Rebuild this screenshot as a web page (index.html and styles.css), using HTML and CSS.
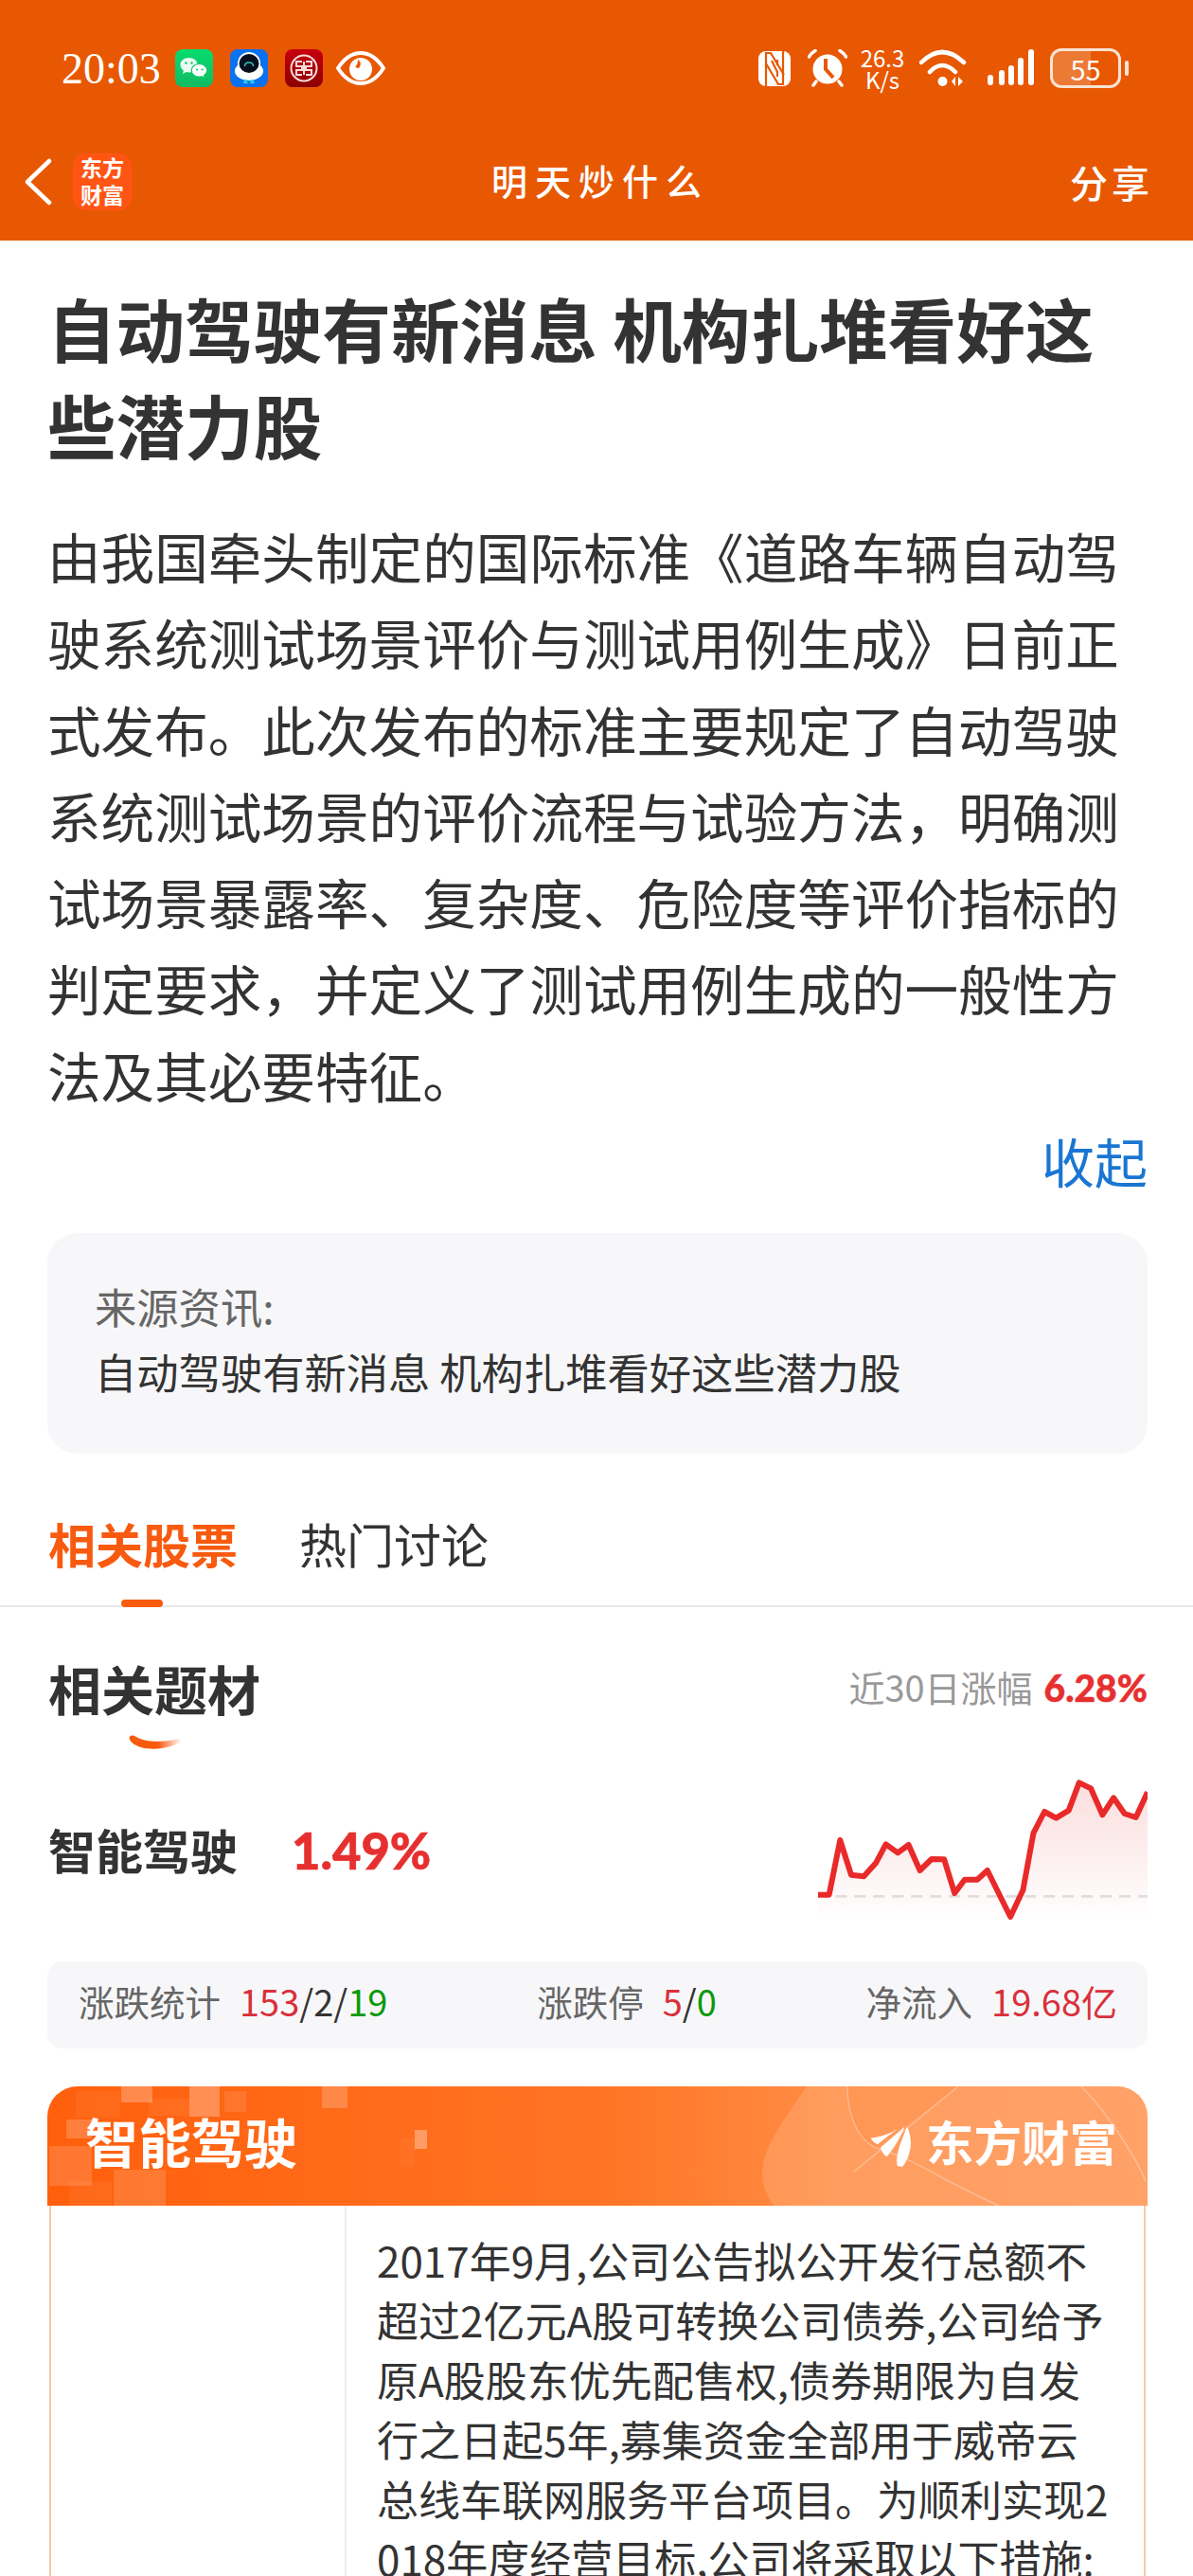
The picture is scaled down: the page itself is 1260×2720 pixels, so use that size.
FILE: index.html
```html
<!DOCTYPE html>
<html lang="zh-CN">
<head>
    <meta charset="UTF-8">
    <meta name="viewport" content="width=device-width, initial-scale=1.0">
    <title>明天炒什么</title>
    <link rel="stylesheet" href="styles.css">
</head>
<body>

<header class="top">
    <div class="status">
        <div class="status-left">
            <span class="time">20:03</span>
            <svg class="app" viewBox="0 0 40 40">
                <defs><linearGradient id="wx" x1="0" y1="0" x2="0" y2="1"><stop offset="0" stop-color="#06dc6f"/><stop offset="1" stop-color="#12bb62"/></linearGradient></defs>
                <rect width="40" height="40" rx="8" fill="url(#wx)"/>
                <path d="M14.500 9C9.300 9 5.500 12.400 5.500 16.500c0 2.400 1.300 4.500 3.400 5.900L8 26l3.800-1.900c.9.300 1.800.4 2.700.4 5.200 0 9-3.400 9-8S19.700 9 14.500 9z" fill="#fff" opacity=".92"/>
                <path d="M25.500 15.500c-4.700 0-8.300 3-8.300 6.800s3.600 6.800 8.300 6.800c.9 0 1.700-.1 2.500-.4l3.300 1.900-.8-3.100c1.900-1.200 3.300-3 3.300-5.200 0-3.800-3.600-6.800-8.300-6.800z" fill="#fff" stroke="#0acb68" stroke-width="1.200"/>
                <circle cx="11.500" cy="14.500" r="1.200" fill="#0acb68"/><circle cx="17.500" cy="14.500" r="1.200" fill="#0acb68"/>
                <circle cx="23" cy="21.500" r="1.100" fill="#0acb68"/><circle cx="28.500" cy="21.500" r="1.100" fill="#0acb68"/>
            </svg>
            <svg class="app app-gap" viewBox="0 0 40 40">
                <rect width="40" height="40" rx="8" fill="#0a72ee"/>
                <ellipse cx="20" cy="23" rx="15" ry="10" fill="#fff"/>
                <circle cx="20" cy="15" r="12" fill="#fff"/>
                <ellipse cx="20" cy="15" rx="10.500" ry="10" fill="#08101f"/>
                <path d="M15.500 18c0-5.500 9-5.500 9 0" fill="none" stroke="#2fc8b4" stroke-width="1.500"/>
                <path d="M15 32h3v3h1v1h-5zM22 32h3v3h1v1h-5z" fill="#27d0e8"/>
            </svg>
            <svg class="app app-gap" viewBox="0 0 40 40">
                <defs><linearGradient id="ic" x1="0" y1="0" x2="0" y2="1"><stop offset="0" stop-color="#c8000e"/><stop offset="1" stop-color="#8b0000"/></linearGradient></defs>
                <rect width="40" height="40" rx="8" fill="url(#ic)"/>
                <circle cx="20" cy="20" r="13.500" fill="none" stroke="#f8dada" stroke-width="2"/>
                <path d="M18 13h-6v5h6v4h-6v5h6M22 13h6v5h-6v4h6v5h-6M20 13v14" fill="none" stroke="#f8dada" stroke-width="2"/>
            </svg>
            <svg class="eye" viewBox="0 0 52 36">
                <path d="M2 18C9 7 17 2 26 2s17 5 24 16c-7 11-15 16-24 16S9 29 2 18z" fill="none" stroke="#fff" stroke-width="4"/>
                <circle cx="26" cy="19" r="12" fill="#fff"/>
                <path d="M23 9c3 2 4 5 1 9l-4-1c2-2 3-5 3-8z" fill="#e85802"/>
            </svg>
        </div>
        <div class="status-right">
            <svg class="nfc" viewBox="0 0 34 37">
                <rect width="34" height="37" rx="8" fill="#fff"/>
                <path d="M8 37V2h5l14 23M26 0v35h-5L8 13M14 10l6 12v5M20 9v6" fill="none" stroke="#e85802" stroke-width="2.200"/>
            </svg>
            <svg class="alarm" viewBox="0 0 42 40">
                <circle cx="21" cy="21" r="15.500" fill="#fff"/>
                <path d="M19 10v11l8 9" fill="none" stroke="#e85802" stroke-width="4"/>
                <path d="M1.500 8C3 5 5.500 3 8 1.500M40.500 8C39 5 36.500 3 34 1.500M9 34l-3 4M33 34l3 4" fill="none" stroke="#fff" stroke-width="3.500" stroke-linecap="round"/>
            </svg>
            <div class="speed">
                <span>26.3</span>
                <span>K/s</span>
            </div>
            <svg class="wifi" viewBox="0 0 50 40">
                <path d="M2 14Q24-8 47 14M11 24Q24 10 38 24" fill="none" stroke="#fff" stroke-width="4.500" stroke-linecap="round"/>
                <circle cx="24.500" cy="34" r="5" fill="#fff"/>
                <path d="M34 34l4-5v10zM41 29v10l5-5z" fill="#fff"/>
            </svg>
            <svg class="signal" viewBox="0 0 50 40">
                <g fill="#fff">
                    <rect x="0" y="27" width="6" height="11" rx="3"/>
                    <rect x="12" y="22" width="6" height="16" rx="3"/>
                    <rect x="22" y="17" width="6" height="21" rx="3"/>
                    <rect x="32" y="9" width="6" height="29" rx="3"/>
                    <rect x="43" y="0" width="6" height="38" rx="3"/>
                </g>
            </svg>
            <div class="battery">
                <span class="battery-fill"></span>
                <span class="battery-num">55</span>
            </div>
            <span class="battery-tip"></span>
        </div>
    </div>
    <nav class="bar">
        <div class="bar-left">
            <svg class="back" viewBox="0 0 30 50">
                <path d="M27 3L4 25l23 22" fill="none" stroke="#fff" stroke-width="4.500" stroke-linecap="round" stroke-linejoin="round"/>
            </svg>
            <span class="logo">东方<br>财富</span>
        </div>
        <span class="bar-title">明天炒什么</span>
        <span class="share">分享</span>
    </nav>
</header>

<main>
    <section class="article">
        <h1>自动驾驶有新消息 机构扎堆看好这些潜力股</h1>
        <p class="summary">由我国牵头制定的国际标准《道路车辆自动驾驶系统测试场景评价与测试用例生成》日前正式发布。此次发布的标准主要规定了自动驾驶系统测试场景的评价流程与试验方法，明确测试场景暴露率、复杂度、危险度等评价指标的判定要求，并定义了测试用例生成的一般性方法及其必要特征。</p>
        <div class="fold">收起</div>
        <div class="source">
            <div class="source-label">来源资讯:</div>
            <div class="source-title">自动驾驶有新消息 机构扎堆看好这些潜力股</div>
        </div>
    </section>

    <div class="tabs">
        <span class="tab tab-active">相关股票</span>
        <span class="tab">热门讨论</span>
    </div>

    <section class="topic">
        <div class="topic-head">
            <h2>相关题材
                <svg class="swoosh" viewBox="0 0 56 16">
                    <defs><linearGradient id="sw" x1="0" y1="0" x2="1" y2="0"><stop offset=".55" stop-color="#f85a0f"/><stop offset="1" stop-color="#f85a0f" stop-opacity="0"/></linearGradient></defs>
                    <path d="M2 1c-3 1-1 6 4 9 10 6 30 7 48-2 3-2 2-5-2-4C38 8 18 8 8 2 6 1 4 0 2 1z" fill="url(#sw)"/>
                </svg>
            </h2>
            <div class="range">近30日涨幅<b>6.28%</b></div>
        </div>
        <div class="topic-row">
            <div class="topic-name">智能驾驶<b>1.49%</b></div>
            <svg class="spark" viewBox="135 480 1045 450" preserveAspectRatio="none">
                <defs><linearGradient id="area" x1="0" y1="0" x2="0" y2="1"><stop offset="0" stop-color="#e82c2c" stop-opacity=".16"/><stop offset="1" stop-color="#e82c2c" stop-opacity="0"/></linearGradient></defs>
                <path d="M135 845L170 845 205 672 240 782 280 787 318 745 350 685 388 712 422 687 458 768 495 732 535 733 568 840 600 797 640 797 672 768 745 915 785 830 818 650 853 582 890 602 930 578 963 490 1000 508 1037 592 1072 538 1107 588 1143 600 1180 520V930H135z" fill="url(#area)"/>
                <path d="M190 850H1180" fill="none" stroke="#e2dcdc" stroke-width="8" stroke-dasharray="36 24"/>
                <path d="M135 845L170 845 205 672 240 782 280 787 318 745 350 685 388 712 422 687 458 768 495 732 535 733 568 840 600 797 640 797 672 768 745 915 785 830 818 650 853 582 890 602 930 578 963 490 1000 508 1037 592 1072 538 1107 588 1143 600 1180 520" fill="none" stroke="#e92a2a" stroke-width="18" stroke-linejoin="round"/>
            </svg>
        </div>
        <div class="stats">
            <div class="stat">涨跌统计<span class="stat-val"><i class="up">153</i>/2/<i class="down">19</i></span></div>
            <div class="stat">涨跌停<span class="stat-val"><i class="up">5</i>/<i class="down">0</i></span></div>
            <div class="stat">净流入<span class="stat-val"><i class="up">19.68亿</i></span></div>
        </div>
    </section>

    <section class="card">
        <div class="card-head">
            <svg class="card-art" viewBox="0 0 1162 126" preserveAspectRatio="none">
                <g fill="#fff">
                    <rect x="78" y="0" width="33" height="17" opacity=".25"/>
                    <rect x="150" y="0" width="32" height="32" opacity=".28"/>
                    <rect x="187" y="5" width="23" height="22" opacity=".1"/>
                    <rect x="30" y="5" width="47" height="28" opacity=".05"/>
                    <rect x="107" y="13" width="43" height="18" opacity=".06"/>
                    <rect x="20" y="35" width="27" height="20" opacity=".2"/>
                    <rect x="2" y="63" width="45" height="42" opacity=".15"/>
                    <rect x="70" y="88" width="55" height="38" opacity=".14"/>
                    <rect x="23" y="100" width="45" height="26" opacity=".05"/>
                    <rect x="290" y="0" width="27" height="23" opacity=".2"/>
                    <rect x="388" y="46" width="13" height="20" opacity=".32"/>
                    <rect x="373" y="55" width="15" height="30" opacity=".04"/>
                    <path d="M802 0C775 40 755 65 755 92c0 12 5 24 12 34h395V0z" opacity=".14"/>
                </g>
                <path d="M845 0c0 30 10 55 30 65L962 0z" fill="#ff8a42" opacity=".35"/>
                <path d="M845 0c0 30 10 55 30 65 50 15 60 30 130 61M962 0L852 90M1092 0c30 30 60 80 68 100" fill="none" stroke="#fff" stroke-opacity=".3" stroke-width="1.500"/>
            </svg>
            <h3>智能驾驶</h3>
            <div class="brand">
                <svg class="brand-icon" viewBox="415 125 140 145">
                    <g fill="#fff">
                        <path d="M420 172C455 168 490 155 516 136 488 156 464 174 442 192 432 188 424 181 420 172z"/>
                        <path d="M452 202C476 182 504 158 528 136 518 168 494 204 472 232 460 224 453 213 452 202z"/>
                        <path d="M506 262C498 235 512 195 537 135 556 175 552 225 522 264z"/>
                    </g>
                </svg>
                <span>东方财富</span>
            </div>
        </div>
        <table class="card-table">
            <tr>
                <td class="col-name"></td>
                <td class="col-text">2017年9月,公司公告拟公开发行总额不超过2亿元A股可转换公司债券,公司给予原A股股东优先配售权,债券期限为自发行之日起5年,募集资金全部用于威帝云总线车联网服务平台项目。为顺利实现2018年度经营目标,公司将采取以下措施:</td>
            </tr>
        </table>
    </section>
</main>

</body>
</html>
```

FILE: styles.css
```css
html, body {
    height: 2720px;
    overflow: hidden;
}

body {
    margin: 0;
    padding: 0;
    background-color: white;
    color: #333;
    font-family: "Noto Sans CJK SC", "Noto Sans", sans-serif;
}

h1, h2, h3, p {
    margin: 0;
}

/* top orange block */
.top {
    background-color: #e85802;
    color: white;
    height: 254px;
}

.status {
    height: 146px;
    padding: 50px 68px 0 65px;
    box-sizing: border-box;
    display: flex;
    justify-content: space-between;
}

.status-left, .status-right {
    display: flex;
    align-items: center;
    height: 44px;
}

.time {
    font-family: "Liberation Serif", serif;
    font-size: 46px;
    width: 120px;
}

.app {
    width: 40px;
    height: 40px;
}

.app-gap {
    margin-left: 18px;
}

.eye {
    width: 52px;
    height: 36px;
    margin-left: 14px;
}

.nfc {
    width: 34px;
    height: 37px;
}

.alarm {
    width: 42px;
    height: 40px;
    margin-left: 18px;
}

.speed {
    width: 52px;
    margin-left: 11px;
    display: flex;
    flex-direction: column;
    align-items: center;
    font-size: 24px;
    line-height: 23px;
}

.wifi {
    width: 50px;
    height: 40px;
    margin-left: 13px;
}

.signal {
    width: 50px;
    height: 40px;
    margin-left: 22px;
}

.battery {
    position: relative;
    width: 75px;
    height: 42px;
    margin-left: 16px;
    box-sizing: border-box;
    border: 3px solid #fbe3d4;
    border-radius: 12px;
    overflow: hidden;
    text-align: center;
    font-size: 29px;
    line-height: 36px;
}

.battery-fill {
    position: absolute;
    left: 0;
    top: 0;
    bottom: 0;
    width: 58%;
    background-color: rgba(255, 255, 255, 0.2);
}

.battery-num {
    position: relative;
}

.battery-tip {
    width: 4px;
    height: 16px;
    margin-left: 4px;
    border-radius: 2px;
    background-color: #fbe3d4;
}

.bar {
    position: relative;
    height: 92px;
    display: flex;
    align-items: center;
    justify-content: space-between;
    padding: 0 42px 0 25px;
}

.bar-left {
    display: flex;
    align-items: center;
}

.back {
    width: 30px;
    height: 50px;
}

.logo {
    width: 62px;
    height: 60px;
    margin-left: 22px;
    background-color: #ff5514;
    border-radius: 14px;
    text-align: center;
    font-size: 23px;
    font-weight: bold;
    line-height: 29px;
}

.bar-title {
    position: absolute;
    left: 519px;
    top: 16px;
    font-size: 38px;
    font-weight: 500;
    line-height: 56px;
    letter-spacing: 8px;
}

.share {
    font-size: 40px;
    font-weight: 500;
    letter-spacing: 4px;
}

/* article */
.article {
    padding: 41px 48px 0 50px;
}

h1 {
    font-size: 72.6px;
    font-weight: bold;
    line-height: 102px;
}

.summary {
    margin-top: 42px;
    font-size: 56.6px;
    line-height: 91.3px;
}

.fold {
    margin: 5px 0 0;
    text-align: right;
    color: #1a76d2;
    font-size: 56px;
    line-height: 80px;
}

.source {
    margin: 37px 0 0;
    padding: 43px 50px 52px;
    background-color: #f7f7f9;
    border-radius: 32px;
    font-size: 44.3px;
    line-height: 69px;
}

.source-label {
    color: #666;
}

/* tabs */
.tabs {
    display: flex;
    gap: 65px;
    padding: 59px 0 31px 51px;
    border-bottom: 2px solid #e8e8e8;
}

.tab {
    position: relative;
    font-size: 50px;
    line-height: 70px;
}

.tab-active {
    color: #f85a0f;
    font-weight: bold;
}

.tab-active::after {
    content: "";
    position: absolute;
    left: 77px;
    bottom: -33px;
    width: 44px;
    height: 8px;
    border-radius: 4px;
    background-color: #f85a0f;
}

/* topic block */
.topic {
    padding: 44px 48px 0 50px;
}

.topic-head {
    display: flex;
    justify-content: space-between;
    align-items: center;
}

h2 {
    position: relative;
    margin-left: 1px;
    font-size: 56px;
    font-weight: bold;
    line-height: 80px;
}

.swoosh {
    position: absolute;
    left: 85px;
    top: 90px;
    width: 56px;
    height: 16px;
}

.range {
    color: #999;
    font-size: 38px;
    line-height: 80px;
}

.range b {
    margin-left: 12px;
    color: #e63030;
    font-family: Lato, sans-serif;
    font-weight: 900;
    font-size: 39px;
    -webkit-text-stroke: 0.5px #e63030;
}

.topic-row {
    display: flex;
    justify-content: space-between;
    align-items: center;
    margin-top: 57px;
    height: 150px;
}

.topic-name {
    margin-left: 1px;
    padding-bottom: 4px;
    font-size: 50px;
    font-weight: bold;
}

.topic-name b {
    margin-left: 57px;
    color: #e63030;
    font-family: Lato, sans-serif;
    font-weight: 900;
    font-size: 52.5px;
    -webkit-text-stroke: 0.6px #e63030;
}

.spark {
    width: 348px;
    height: 150px;
}

.stats {
    display: flex;
    justify-content: space-between;
    align-items: center;
    box-sizing: border-box;
    height: 92px;
    margin-top: 42px;
    padding: 0 32px 10px 33px;
    background-color: #f7f7f9;
    border-radius: 16px;
    color: #666;
    font-size: 37.5px;
}

.stat-val {
    margin-left: 20px;
    color: #333;
    font-size: 38px;
}

.stat-val i {
    font-style: normal;
}

.up {
    color: #d9303a;
}

.down {
    color: #0a9a0a;
}

/* orange card */
.card {
    margin: 40px 48px 0 50px;
}

.card-head {
    position: relative;
    box-sizing: border-box;
    height: 126px;
    padding: 0 32px 13px 40px;
    display: flex;
    justify-content: space-between;
    align-items: center;
    overflow: hidden;
    border-radius: 32px 32px 0 0;
    background: linear-gradient(90deg, #ff5f0c 0%, #ff7424 50%, #ff8d45 72%, #ff9350 100%);
    color: white;
}

.card-art {
    position: absolute;
    left: 0;
    top: 0;
    width: 100%;
    height: 100%;
}

.card-head h3 {
    position: relative;
    font-size: 56px;
    font-weight: bold;
}

.brand {
    position: relative;
    display: flex;
    align-items: center;
    gap: 14px;
    font-size: 50.5px;
    font-weight: bold;
    line-height: 60px;
}

.brand-icon {
    width: 46px;
    height: 48px;
    margin-top: 12px;
}

.card-table {
    width: 1158px;
    margin-left: 2px;
    table-layout: fixed;
    border-collapse: collapse;
    border-left: 2px solid #f6c9a6;
    border-right: 2px solid #f6c9a6;
}

.col-name {
    width: 308px;
    border-right: 2px solid #eee;
}

.col-text {
    padding: 26px 34px 0 32px;
    font-size: 44px;
    line-height: 63px;
    word-break: break-all;
}
```
